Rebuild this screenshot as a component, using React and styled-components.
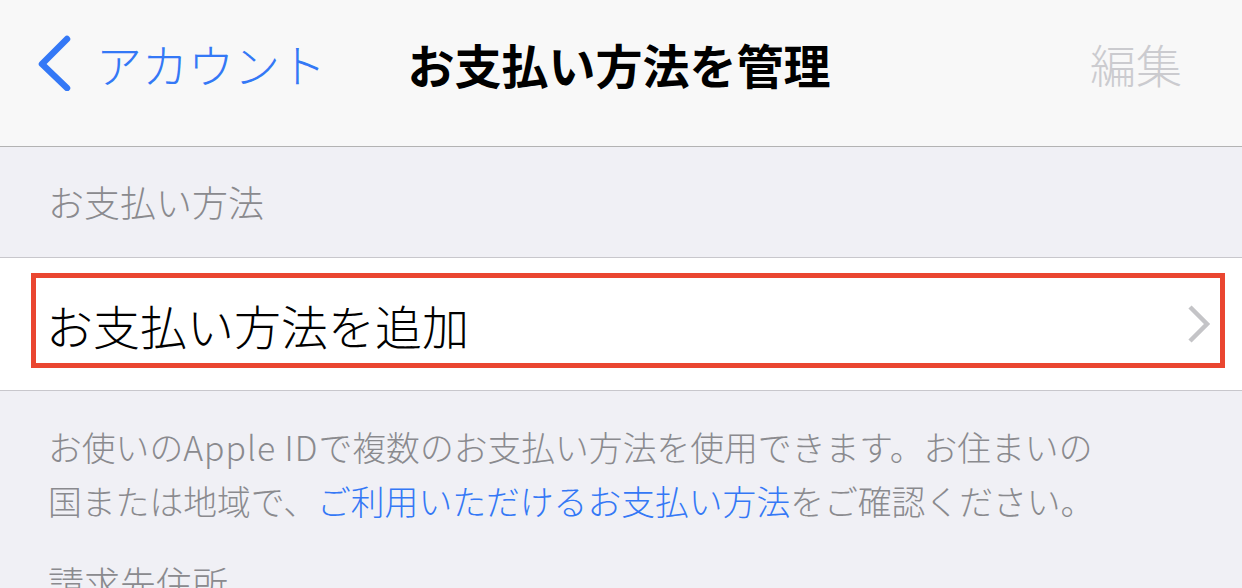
import React from 'react';
import styled, { createGlobalStyle } from 'styled-components';

const GlobalStyle = createGlobalStyle`
    body {
        margin: 0;
        background: #f0f0f5;
        font-family: "Noto Sans CJK JP", "Noto Sans", sans-serif;
        font-weight: 300;
    }
`;

const Screen = styled.div`
    width: 1242px;
    height: 588px;
    overflow: hidden;
    background: #f0f0f5;
`;

const NavBar = styled.div`
    display: grid;
    grid-template-columns: 1fr auto 1fr;
    align-items: center;
    height: 147px;
    padding-bottom: 20px;
    box-sizing: border-box;
    background: #f8f8f8;
    border-bottom: 1px solid #b3b3b3;
`;

const BackButton = styled.div`
    display: flex;
    align-items: center;
    gap: 24px;
    padding-left: 38px;
    color: #3478f6;
    font-size: 46px;
    line-height: 1;
    svg {
        display: block;
        flex-shrink: 0;
    }
`;

const Title = styled.div`
    padding-right: 4px;
    font-size: 47px;
    font-weight: 700;
    line-height: 1;
    color: #000;
`;

const EditButton = styled.div`
    justify-self: end;
    padding-right: 60px;
    font-size: 46px;
    line-height: 1;
    color: #cbcbcf;
`;

const SectionHeader = styled.div`
    display: flex;
    align-items: center;
    height: 110px;
    padding: 0 0 2px 48px;
    box-sizing: border-box;
    font-size: 36px;
    line-height: 1;
    color: #8a8a8e;
`;

const Row = styled.div`
    position: relative;
    display: flex;
    align-items: center;
    justify-content: space-between;
    height: 134px;
    padding: 0 30px 0 46px;
    box-sizing: border-box;
    background: #fff;
    border-top: 1px solid #c8c7cc;
    border-bottom: 1px solid #c8c7cc;
    font-size: 47px;
    line-height: 1;
    color: #000;
    svg {
        display: block;
    }
`;

const Highlight = styled.div`
    position: absolute;
    left: 31px;
    right: 17px;
    top: 15px;
    bottom: 22px;
    border: 5px solid #ea4630;
    pointer-events: none;
`;

const Footer = styled.div`
    padding: 29px 40px 0 48px;
    font-size: 33.8px;
    line-height: 54px;
    color: #8a8a8e;
`;

const Latin = styled.span`
    letter-spacing: 1px;
`;

const Link = styled.span`
    color: #3478f6;
`;

const BackChevron = () => (
    <svg width="34" height="56" viewBox="0 0 34 56">
        <path d="M29 4 L4 29 L29 53" fill="none" stroke="#3478f6" strokeWidth="6.5" strokeLinecap="round" strokeLinejoin="round" />
    </svg>
);

const Disclosure = () => (
    <svg width="26" height="40" viewBox="0 0 26 40">
        <path d="M4 3 L21 20 L4 37" fill="none" stroke="#c4c4c7" strokeWidth="4.5" strokeLinejoin="miter" />
    </svg>
);

const App = () => {
    return (
        <>
            <GlobalStyle />
            <Screen>
                <NavBar>
                    <BackButton>
                        <BackChevron />
                        <span>アカウント</span>
                    </BackButton>
                    <Title>お支払い方法を管理</Title>
                    <EditButton>編集</EditButton>
                </NavBar>
                <SectionHeader>お支払い方法</SectionHeader>
                <Row>
                    <span>お支払い方法を追加</span>
                    <Disclosure />
                    <Highlight />
                </Row>
                <Footer>
                    お使いの<Latin>Apple ID</Latin>で複数のお支払い方法を使用できます。お住まいの<br />
                    国または地域で、<Link>ご利用いただけるお支払い方法</Link>をご確認ください。
                </Footer>
                <SectionHeader>請求先住所</SectionHeader>
            </Screen>
        </>
    );
};

export default App;
